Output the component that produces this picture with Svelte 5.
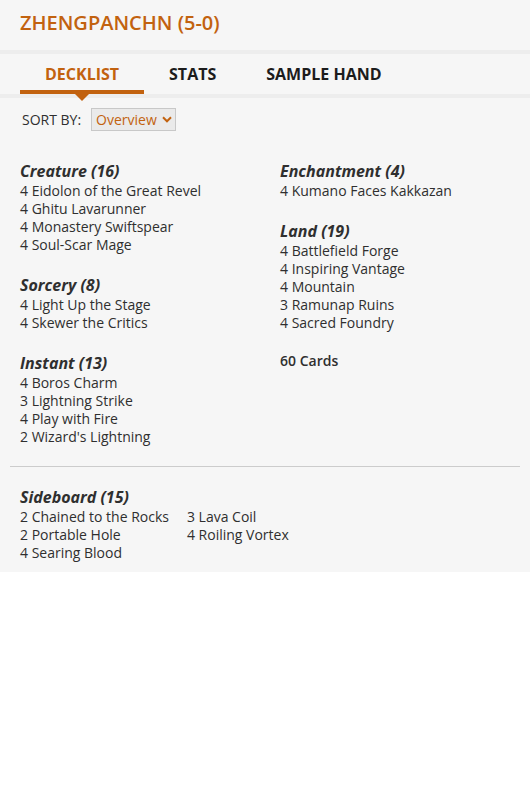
<script>
  let sort = $state('Overview');
  const tabs = ['Decklist', 'Stats', 'Sample Hand'];
  let active = $state('Decklist');

  const columns = [
    [
      { name: 'Creature', total: 16, cards: [[4, 'Eidolon of the Great Revel'], [4, 'Ghitu Lavarunner'], [4, 'Monastery Swiftspear'], [4, 'Soul-Scar Mage']] },
      { name: 'Sorcery', total: 8, cards: [[4, 'Light Up the Stage'], [4, 'Skewer the Critics']] },
      { name: 'Instant', total: 13, cards: [[4, 'Boros Charm'], [3, 'Lightning Strike'], [4, 'Play with Fire'], [2, "Wizard's Lightning"]] }
    ],
    [
      { name: 'Enchantment', total: 4, cards: [[4, 'Kumano Faces Kakkazan']] },
      { name: 'Land', total: 19, cards: [[4, 'Battlefield Forge'], [4, 'Inspiring Vantage'], [4, 'Mountain'], [3, 'Ramunap Ruins'], [4, 'Sacred Foundry']] }
    ]
  ];
  const sideboard = [
    [[2, 'Chained to the Rocks'], [2, 'Portable Hole'], [4, 'Searing Blood']],
    [[3, 'Lava Coil'], [4, 'Roiling Vortex']]
  ];
</script>

{#snippet cardList(cards)}
  <ul>
    {#each cards as [count, card]}
      <li>{count} {card}</li>
    {/each}
  </ul>
{/snippet}

<article class="deck">
  <header><h4>ZHENGPANCHN (5-0)</h4></header>

  <nav>
    {#each tabs as tab}
      <button class:active={active === tab} onclick={() => (active = tab)}>{tab.toUpperCase()}</button>
    {/each}
  </nav>

  <div class="sort">
    <label for="sort">SORT BY:</label>
    <span class="picker">
      <select id="sort" bind:value={sort}>
        <option>Overview</option>
        <option>Color</option>
        <option>Cost</option>
        <option>Rarity</option>
      </select>
      <svg viewBox="0 0 10 7" aria-hidden="true"><path d="M1 1.3 5 5.3 9 1.3" /></svg>
    </span>
  </div>

  <div class="main">
    {#each columns as groups, i}
      <div class="column">
        {#each groups as group}
          <section>
            <h5>{group.name} ({group.total})</h5>
            {@render cardList(group.cards)}
          </section>
        {/each}
        {#if i === 1}
          <p class="total">60 Cards</p>
        {/if}
      </div>
    {/each}
  </div>

  <section class="sideboard">
    <h5>Sideboard (15)</h5>
    <div class="side-columns">
      {#each sideboard as cards}
        {@render cardList(cards)}
      {/each}
    </div>
  </section>
</article>

<style>
  :global(body) {
    margin: 0;
    background: #fff;
  }
  .deck {
    --accent: #c2620f;
    background: #f6f6f6;
    color: #2f2f2f;
    font: 14px/18px 'Open Sans', sans-serif;
    padding-bottom: 10px;
  }
  h4, h5, ul, p {
    margin: 0;
    padding: 0;
  }
  header {
    padding: 8px 20px 12px;
    border-bottom: 4px solid #ededed;
  }
  h4 {
    font-size: 20px;
    line-height: 30px;
    font-weight: 600;
    color: var(--accent);
  }
  nav {
    display: flex;
    padding: 0 20px;
    border-bottom: 4px solid #ededed;
  }
  button {
    position: relative;
    height: 40px;
    padding: 4px 25px 0;
    border: 0;
    border-bottom: 4px solid transparent;
    background: none;
    color: #1c1c1c;
    font: 700 16px/32px 'Open Sans', sans-serif;
    cursor: pointer;
  }
  button.active {
    color: var(--accent);
    border-color: var(--accent);
  }
  button.active::after {
    content: '';
    position: absolute;
    top: 100%;
    left: 50%;
    margin: 4px 0 0 -7px;
    border: 7px solid transparent;
    border-top-color: var(--accent);
    border-bottom: 0;
  }
  .sort {
    display: flex;
    align-items: center;
    gap: 10px;
    padding: 10px 22px 29px;
  }
  .picker {
    position: relative;
    display: flex;
  }
  select {
    appearance: none;
    height: 23px;
    padding: 0 18px 0 4px;
    border: 1px solid #c8c8c8;
    border-radius: 0;
    background: #eaeaea;
    color: var(--accent);
    font: 14px/20px 'Open Sans', sans-serif;
  }
  svg {
    position: absolute;
    right: 4px;
    top: 8px;
    width: 10px;
    height: 7px;
    fill: none;
    stroke: var(--accent);
    stroke-width: 2;
    pointer-events: none;
  }
  .main {
    display: grid;
    grid-template-columns: 1fr 1fr;
    gap: 30px;
    margin: 0 10px;
    padding: 0 10px 20px;
    border-bottom: 1px solid #ccc;
  }
  .column {
    display: flex;
    flex-direction: column;
    gap: 20px;
  }
  h5 {
    font-size: 16px;
    line-height: 22px;
    font-weight: 700;
    font-style: italic;
  }
  ul {
    list-style: none;
  }
  .total {
    font-weight: 600;
  }
  .sideboard {
    padding: 19px 20px 0;
  }
  .side-columns {
    display: flex;
    gap: 18px;
  }
</style>
